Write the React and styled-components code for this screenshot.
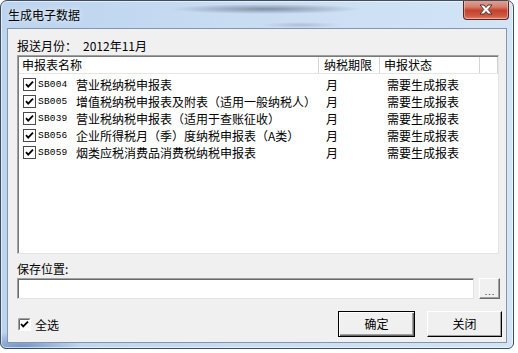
import React from 'react';
import styled, { createGlobalStyle } from 'styled-components';

const Global = createGlobalStyle`
  html, body { margin: 0; padding: 0; background: #ffffff; }
  body {
    font-family: "Noto Sans CJK SC", "Liberation Sans", sans-serif;
    font-size: 12px;
    color: #000;
  }
  * { box-sizing: border-box; }
`;

const Window = styled.div`
  width: 514px;
  height: 349px;
  border: 1px solid #3e4d61;
  border-radius: 7px 7px 6px 6px;
  background:
    radial-gradient(ellipse 95px 5px at 265px 8px, rgba(70, 80, 100, 0.55), rgba(70, 80, 100, 0) 100%),
    radial-gradient(ellipse 40px 3px at 300px 24px, rgba(90, 100, 120, 0.25), rgba(90, 100, 120, 0) 100%),
    radial-gradient(ellipse 60px 14px at 20px 345px, rgba(60, 100, 170, 0.55), rgba(60, 100, 170, 0) 100%),
    linear-gradient(to right, #bcd4ee 0%, #c8dcf2 45%, #d3e4f6 100%);
  box-shadow: inset 0 0 0 1px rgba(255, 255, 255, 0.55);
  display: flex;
  flex-direction: column;
  padding: 0 6px 5px 6px;
  overflow: hidden;
`;

const TitleBar = styled.div`
  height: 27px;
  display: flex;
  align-items: flex-start;
  justify-content: space-between;
`;

const Title = styled.div`
  padding: 6px 0 0 1px;
  font-size: 12px;
  line-height: 16px;
  color: #000;
  text-shadow: 0 0 6px rgba(255, 255, 255, 0.9);
`;

const CloseButton = styled.div`
  width: 46px;
  height: 20px;
  margin-top: -1px;
  margin-right: -2px;
  border: 1px solid #5a2521;
  border-top: none;
  border-radius: 0 0 4px 4px;
  background: linear-gradient(to bottom, #e2a596 0%, #d6816f 35%, #c4412d 55%, #cf5a43 85%, #e08b73 100%);
  box-shadow: inset 0 0 0 1px rgba(255, 220, 210, 0.45);
  display: flex;
  align-items: center;
  justify-content: center;
`;

const Client = styled.div`
  flex: 1;
  border: 1px solid #8496ad;
  background: #f0f0f0;
  display: flex;
  flex-direction: column;
  padding: 0 7px 0 9px;
`;

const MonthRow = styled.div`
  margin-top: 9px;
  height: 16px;
  line-height: 16px;
  display: flex;
  gap: 6px;
`;

const ListBox = styled.div`
  margin-top: 1px;
  height: 199px;
  background: #fff;
  border: 1px solid;
  border-color: #a0a0a0 #e3e3e3 #e3e3e3 #a0a0a0;
  box-shadow: inset 1px 1px 0 #7a7a7a;
  display: flex;
  flex-direction: column;
`;

const Grid = styled.div`
  display: grid;
  grid-template-columns: 300px 61px 100px 1fr;
`;

const HeaderRow = styled(Grid)`
  height: 17px;
  margin-top: 1px;
  margin-left: 1px;
  border-bottom: 1px solid #e5e5e5;
`;

const HeaderCell = styled.div`
  padding-left: ${p => p.$pad}px;
  line-height: 16px;
  border-right: 1px solid #d5d5d5;
  white-space: nowrap;
  overflow: hidden;
`;

const Body = styled.div`
  padding-top: 2px;
  margin-left: 1px;
`;

const Row = styled(Grid)`
  height: 17px;
  line-height: 17px;
`;

const NameCell = styled.div`
  display: flex;
  align-items: center;
  padding-left: 4px;
  white-space: nowrap;
  overflow: hidden;
`;

const Code = styled.span`
  width: 38px;
  margin-left: 2px;
  font-family: "Liberation Mono", "DejaVu Sans Mono", monospace;
  font-size: 9.5px;
  letter-spacing: 0.2px;
  color: #000;
`;

const Cell = styled.div`
  padding-left: ${p => p.$pad}px;
  white-space: nowrap;
`;

const FieldLabel = styled.div`
  margin-top: 7px;
  height: 16px;
  line-height: 16px;
`;

const PathRow = styled.div`
  margin-top: 1px;
  height: 21px;
  display: flex;
  gap: 5px;
  margin-right: -1px;
`;

const PathInput = styled.div`
  flex: 1;
  background: #fff;
  border: 1px solid;
  border-color: #a0a0a0 #e3e3e3 #e3e3e3 #a0a0a0;
  box-shadow: inset 1px 1px 0 #696969;
`;

const BrowseButton = styled.div`
  width: 21px;
  background: #f0f0f0;
  border: 1px solid;
  border-color: #ffffff #696969 #696969 #ffffff;
  box-shadow: inset -1px -1px 0 #a0a0a0;
  display: flex;
  align-items: flex-end;
  justify-content: center;
  font-family: "Liberation Sans", sans-serif;
  font-size: 9px;
  line-height: 12px;
  letter-spacing: 1px;
  padding-left: 1px;
  color: #000;
`;

const BottomRow = styled.div`
  margin-top: 12px;
  height: 26px;
  display: flex;
  align-items: center;
  margin-right: -3px;
`;

const SelectAll = styled.label`
  display: flex;
  align-items: center;
  gap: 4px;
  margin-left: 1px;
  flex: 1;
`;

const Button = styled.div`
  width: ${p => p.$w}px;
  height: 26px;
  margin-left: ${p => p.$ml}px;
  background: #f0f0f0;
  border: 1px solid;
  border-color: ${p => (p.$default ? '#000' : '#ffffff #000 #000 #ffffff')};
  box-shadow: ${p =>
    p.$default
      ? 'inset 1px 1px 0 #fff, inset -1px -1px 0 #696969, inset -2px -2px 0 #a0a0a0'
      : 'inset -1px -1px 0 #a0a0a0'};
  display: flex;
  align-items: center;
  justify-content: center;
  line-height: 16px;
`;

const RowCheck = () => (
  <svg width="13" height="13" viewBox="0 0 13 13">
    <rect x="0.5" y="0.5" width="12" height="12" fill="#fff" stroke="#4a4a4a" />
    <path d="M3 6.2 L5.2 8.6 L10 3.6" fill="none" stroke="#000" strokeWidth="1.8" />
  </svg>
);

const SunkenCheck = () => (
  <svg width="13" height="13" viewBox="0 0 13 13">
    <rect x="0" y="0" width="13" height="13" fill="#fff" />
    <path d="M0.5 12.5 V0.5 H12.5" fill="none" stroke="#a0a0a0" />
    <path d="M1.5 11.5 V1.5 H11.5" fill="none" stroke="#696969" />
    <path d="M0.5 12.5 H12.5 V0.5" fill="none" stroke="#ffffff" />
    <path d="M3 6 L5.2 8.4 L10 3.6" fill="none" stroke="#000" strokeWidth="1.8" />
  </svg>
);

const CloseGlyph = () => (
  <svg width="14" height="11" viewBox="0 0 14 11">
    <path
      d="M1 1 H5 L7 3.5 L9 1 H13 L9.2 5.5 L13 10 H9 L7 7.5 L5 10 H1 L4.8 5.5 Z"
      fill="#ffffff"
      stroke="#4b3532"
      strokeWidth="1"
      strokeLinejoin="round"
    />
  </svg>
);

const items = [
  { code: 'SB004', name: '营业税纳税申报表' },
  { code: 'SB005', name: '增值税纳税申报表及附表（适用一般纳税人）' },
  { code: 'SB039', name: '营业税纳税申报表（适用于查账征收）' },
  { code: 'SB056', name: '企业所得税月（季）度纳税申报表（A类）' },
  { code: 'SB059', name: '烟类应税消费品消费税纳税申报表' },
];

export default function App() {
  return (
    <>
      <Global />
      <Window>
        <TitleBar>
          <Title>生成电子数据</Title>
          <CloseButton>
            <CloseGlyph />
          </CloseButton>
        </TitleBar>
        <Client>
          <MonthRow>
            <span>报送月份：</span>
            <span>2012年11月</span>
          </MonthRow>
          <ListBox>
            <HeaderRow>
              <HeaderCell $pad={3}>申报表名称</HeaderCell>
              <HeaderCell $pad={5}>纳税期限</HeaderCell>
              <HeaderCell $pad={4}>申报状态</HeaderCell>
              <HeaderCell $pad={0} />
            </HeaderRow>
            <Body>
              {items.map(it => (
                <Row key={it.code}>
                  <NameCell>
                    <RowCheck />
                    <Code>{it.code}</Code>
                    <span>{it.name}</span>
                  </NameCell>
                  <Cell $pad={7}>月</Cell>
                  <Cell $pad={7}>需要生成报表</Cell>
                  <Cell $pad={0} />
                </Row>
              ))}
            </Body>
          </ListBox>
          <FieldLabel>保存位置:</FieldLabel>
          <PathRow>
            <PathInput />
            <BrowseButton>...</BrowseButton>
          </PathRow>
          <BottomRow>
            <SelectAll>
              <SunkenCheck />
              <span>全选</span>
            </SelectAll>
            <Button $w={77} $ml={0} $default>确定</Button>
            <Button $w={75} $ml={12}>关闭</Button>
          </BottomRow>
        </Client>
      </Window>
    </>
  );
}
